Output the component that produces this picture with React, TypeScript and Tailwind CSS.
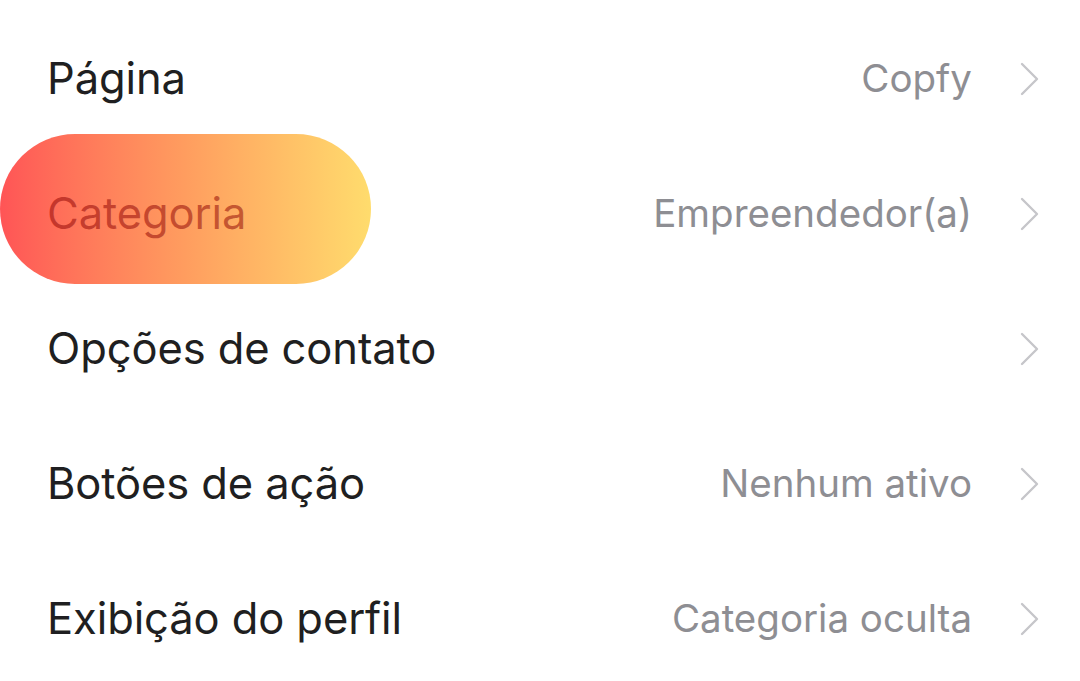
import React from 'react';

interface Row {
  label: string;
  value?: string;
  highlight?: boolean;
}

const rows: Row[] = [
  { label: 'Página', value: 'Copfy' },
  { label: 'Categoria', value: 'Empreendedor(a)', highlight: true },
  { label: 'Opções de contato' },
  { label: 'Botões de ação', value: 'Nenhum ativo' },
  { label: 'Exibição do perfil', value: 'Categoria oculta' },
];

function Chevron() {
  return (
    <svg width="22" height="36" viewBox="0 0 22 36" fill="none" className="shrink-0">
      <path d="M3 3 L18 18 L3 33" stroke="#c6c6ca" strokeWidth="2.4" strokeLinecap="round" strokeLinejoin="round" />
    </svg>
  );
}

export default function App() {
  return (
    <div
      className="w-[1080px] h-[681px] bg-white overflow-hidden pt-[11px] relative"
      style={{ fontFamily: 'Inter, "Noto Sans", sans-serif' }}
    >
      {rows.map((row) => (
        <div key={row.label} className="relative h-[135px] flex items-center pl-[47px] pr-[39px]">
          {row.highlight && (
            <div className="absolute left-0 top-[-12px] w-[371px] h-[150px] rounded-full bg-gradient-to-r from-[#ff5456] via-[#ff9d5f] to-[#ffdc6d]" />
          )}
          <span
            className={`relative text-[43.5px] tracking-[-0.1px] ${
              row.highlight ? 'text-[#8b0000]/50' : 'text-[#1f1f21]'
            }`}
          >
            {row.label}
          </span>
          <div className="ml-auto flex items-center gap-[47px]">
            {row.value && <span className="text-[38.5px] text-[#8e8e93]">{row.value}</span>}
            <Chevron />
          </div>
        </div>
      ))}
    </div>
  );
}
